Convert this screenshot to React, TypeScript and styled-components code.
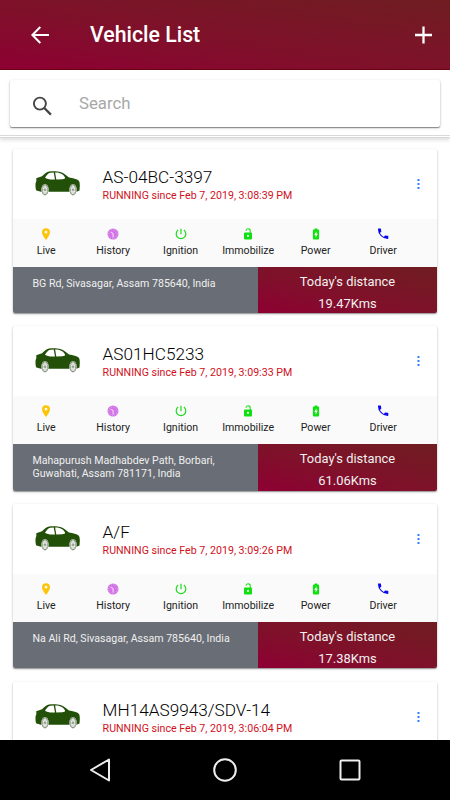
import React from "react";
import styled, { createGlobalStyle } from "styled-components";

const Global = createGlobalStyle`
  * { box-sizing: border-box; }
  body { margin: 0; background: #fff; font-family: Roboto, "Liberation Sans", sans-serif; }
`;

const Screen = styled.div`
  width: 450px;
  height: 800px;
  display: flex;
  flex-direction: column;
  overflow: hidden;
  background: #fff;
`;

const AppBar = styled.header`
  flex: none;
  height: 70px;
  display: flex;
  align-items: center;
  padding: 0 17px 0 30px;
  color: #fff;
  background: linear-gradient(to top right, #8e0033 0%, #7f112a 45%, #6f1d21 100%);
  border-bottom: 1px solid #6c0714;
`;

const BarIcon = styled.svg`
  flex: none;
  width: 20px;
  height: 20px;
  display: block;
`;

const Title = styled.h1`
  flex: 1;
  margin: 0 0 0 40px;
  font-size: 21.3px;
  line-height: 28px;
  font-weight: 500;
`;

const SearchSection = styled.div`
  flex: none;
  height: 68px;
  padding: 10px 10px 0;
  border-bottom: 3px double #d9d9d9;
  box-shadow: 0 2px 4px rgba(0, 0, 0, 0.14);
`;

const SearchBox = styled.div`
  height: 46.5px;
  display: flex;
  align-items: center;
  padding-left: 22px;
  border-radius: 2px;
  background: #fff;
  box-shadow: 0 1px 1px rgba(0, 0, 0, 0.38), 0 1px 3px rgba(0, 0, 0, 0.22);
`;

const SearchGlyph = styled.svg`
  width: 20px;
  height: 20px;
  margin-top: 6px;
`;

const Placeholder = styled.span`
  margin-left: 27px;
  color: #a8a8a8;
  font-size: 16.8px;
  line-height: 20px;
`;

const List = styled.main`
  flex: 1;
  min-height: 0;
  overflow: hidden;
  padding: 10.8px 13px 0;
`;

const Card = styled.article`
  margin-bottom: 13.2px;
  border-radius: 2px;
  overflow: hidden;
  background: #fff;
  box-shadow: 0 1px 1px rgba(0, 0, 0, 0.3), 0 1px 3px rgba(0, 0, 0, 0.2);
`;

const Head = styled.div`
  height: 70px;
  display: flex;
  align-items: flex-start;
  padding: 0 14px 0 22px;
`;

const Car = styled.svg`
  flex: none;
  width: 46px;
  height: 27px;
  margin-top: 22px;
`;

const HeadText = styled.div`
  flex: 1;
  margin: 17px 0 0 21.6px;
  white-space: nowrap;
`;

const Plate = styled.div`
  font-size: 17.2px;
  line-height: 22px;
  font-weight: 300;
  color: #000;
`;

const Status = styled.div`
  font-size: 10.64px;
  line-height: 15px;
  color: #d0101c;
`;

const More = styled.svg`
  flex: none;
  width: 10px;
  height: 12px;
  margin-top: 29px;
`;

const Actions = styled.div`
  height: 48px;
  display: grid;
  grid-template-columns: 66.4px repeat(5, 67.5px);
  background: #fafafa;
`;

const Action = styled.div`
  display: flex;
  flex-direction: column;
  align-items: center;
  padding-top: 9px;
  font-size: 10.6px;
  line-height: 14px;
  color: #222;
`;

const ActionIcon = styled.svg`
  width: 12px;
  height: 12px;
  margin-bottom: 4px;
`;

const Footer = styled.div`
  height: 46.4px;
  display: flex;
  color: #f0f0f0;
`;

const Address = styled.div`
  width: 245px;
  padding: 10px 20px 0 19.5px;
  background: #696d75;
  font-size: 10.6px;
  line-height: 13px;
`;

const Distance = styled.div`
  flex: 1;
  padding: 4px 0 0;
  text-align: center;
  font-size: 12.9px;
  line-height: 22px;
  background: linear-gradient(to top right, #8e0033 0%, #7f112a 45%, #6f1d21 100%);
`;

const NavBar = styled.nav`
  flex: none;
  height: 60px;
  display: flex;
  align-items: center;
  justify-content: space-between;
  padding: 0 88px;
  background: #000;
`;

const NavIcon = styled.svg`
  width: 24px;
  height: 24px;
`;

const actions: { label: string; icon: React.ReactNode }[] = [
  {
    label: "Live",
    icon: (
      <path
        fill="#fdc409"
        fillRule="evenodd"
        d="M6 .2A4 4 0 0 0 2 4.2C2 7.2 6 12 6 12s4-4.8 4-7.8A4 4 0 0 0 6 .2zm0 2.6a1.4 1.4 0 1 1 0 2.8 1.4 1.4 0 0 1 0-2.8z"
      />
    ),
  },
  {
    label: "History",
    icon: (
      <>
        <circle cx="6" cy="6" r="5.5" fill="#d273e6" />
        <circle cx="6" cy="6" r="4.2" fill="none" stroke="#f0cef7" strokeWidth=".8" strokeDasharray=".7 1.5" />
        <path d="M3.6 4.3 6.1 5.4V9.4" fill="none" stroke="#faf0fc" strokeWidth=".9" />
      </>
    ),
  },
  {
    label: "Ignition",
    icon: (
      <path d="M6 .7v5.6M3.1 2.1a4.8 4.8 0 1 0 5.8 0" fill="none" stroke="#1bdc1b" strokeWidth="1.2" />
    ),
  },
  {
    label: "Immobilize",
    icon: (
      <>
        <path d="M4 2.7A2.1 2.1 0 0 1 8.2 2.9V5" fill="none" stroke="#0fe00f" strokeWidth="1.1" />
        <rect x="2" y="4.4" width="8" height="7" rx="1" fill="#0fe00f" />
        <circle cx="6" cy="7.9" r="1.05" fill="#fafafa" />
      </>
    ),
  },
  {
    label: "Power",
    icon: (
      <>
        <path d="M4.7.6h2.6v1h1q.8 0 .8.8v8.2q0 .8-.8.8H3.7q-.8 0-.8-.8V2.4q0-.8.8-.8h1z" fill="#0fe00f" />
        <path d="M6.5 3.3 4.2 7.1h1.4v2.6l2.2-3.9H6.5z" fill="#fafafa" />
      </>
    ),
  },
  {
    label: "Driver",
    icon: (
      <path
        fill="#0808f0"
        d="M2.9 5A8.6 8.6 0 0 0 6.8 8.9l1.3-1.3c.2-.2.4-.2.6-.1.7.2 1.4.3 2.1.3.3 0 .5.2.5.5v2.2c0 .3-.2.5-.5.5A9.9 9.9 0 0 1 .9 1.1C.9.8 1.1.6 1.4.6h2.1c.3 0 .5.2.5.5 0 .7.1 1.4.3 2.1.1.2 0 .4-.1.6z"
      />
    ),
  },
];

interface Vehicle {
  plate: string;
  time: string;
  details?: { address: string; km: string };
}

const vehicles: Vehicle[] = [
  {
    plate: "AS-04BC-3397",
    time: "3:08:39 PM",
    details: { address: "BG Rd, Sivasagar, Assam 785640, India", km: "19.47Kms" },
  },
  {
    plate: "AS01HC5233",
    time: "3:09:33 PM",
    details: { address: "Mahapurush Madhabdev Path, Borbari, Guwahati, Assam 781171, India", km: "61.06Kms" },
  },
  {
    plate: "A/F",
    time: "3:09:26 PM",
    details: { address: "Na Ali Rd, Sivasagar, Assam 785640, India", km: "17.38Kms" },
  },
  { plate: "MH14AS9943/SDV-14", time: "3:06:04 PM" },
];

function CarDrawing() {
  return (
    <Car viewBox="0 0 46 27">
      <path
        fill="#235008"
        d="M1.2 7.2 7 5.2C9.5 2.5 12 1 14 .5c4-.5 8.500-.4 11.400.5C29 2.300 31.500 4.500 34 6.400c4 .7 8 1.500 9.800 3.300.9 1.300 1 3 1 5.300l-.3 4.600-3 1.200H6l-4.600-1.200C.7 18.500.4 16 .5 13c.2-1.500.6-2.400.9-3.300z"
      />
      <path
        fill="#fff"
        d="M10 6.800c1.400-2.700 3.300-4.500 5.300-5l3.400-.2 1.300 6.800c-3.500.3-7.900.2-10-1.600zM20.100 1.600c3.400 0 5.300.5 7 1.600 1.600 1.100 2.600 2.500 3.100 3.800-.6.8-1.500 1.200-2.700 1.200l-6.200.3z"
      />
      {[10, 38].map((x) => (
        <g key={x}>
          <ellipse cx={x} cy="18.8" rx="3.8" ry="5.900" fill="#f8faf7" />
          <ellipse cx={x} cy="18.8" rx="3.1" ry="5.100" fill="#c8cec4" stroke="#526449" strokeWidth=".7" />
          <path d={`M${x} 14.5v8.6M${x - 2.5} 16.800l5 4.200M${x + 2.5} 16.800l-5 4.200`} stroke="#fff" strokeWidth=".8" />
          <ellipse cx={x} cy="18.8" rx=".8" ry="1.200" fill="#718069" />
        </g>
      ))}
    </Car>
  );
}

export default function App() {
  return (
    <>
      <Global />
      <Screen>
        <AppBar>
          <BarIcon viewBox="0 0 20 20">
            <path d="M19 10H3M10.3 2 2.400 10l7.900 8" fill="none" stroke="#fff" strokeWidth="2" />
          </BarIcon>
          <Title>Vehicle List</Title>
          <BarIcon viewBox="0 0 20 20">
            <path d="M2 10h17M10.5 1.500v17" fill="none" stroke="#fff" strokeWidth="2.3" />
          </BarIcon>
        </AppBar>
        <SearchSection>
          <SearchBox>
            <SearchGlyph viewBox="0 0 20 20">
              <circle cx="7.9" cy="7.6" r="6" fill="none" stroke="#444" strokeWidth="1.9" />
              <path d="m12.300 12 6.600 6.600" stroke="#444" strokeWidth="2.3" />
            </SearchGlyph>
            <Placeholder>Search</Placeholder>
          </SearchBox>
        </SearchSection>
        <List>
          {vehicles.map((v) => (
            <Card key={v.plate}>
              <Head>
                <CarDrawing />
                <HeadText>
                  <Plate>{v.plate}</Plate>
                  <Status>RUNNING since Feb 7, 2019, {v.time}</Status>
                </HeadText>
                <More viewBox="0 0 10 12">
                  <path d="M4.500 1h2v2h-2zM4.500 5h2v2h-2zM4.500 9h2v2h-2z" fill="#2c80ff" />
                </More>
              </Head>
              {v.details && (
                <>
                  <Actions>
                    {actions.map((a) => (
                      <Action key={a.label}>
                        <ActionIcon viewBox="0 0 12 12">{a.icon}</ActionIcon>
                        {a.label}
                      </Action>
                    ))}
                  </Actions>
                  <Footer>
                    <Address>{v.details.address}</Address>
                    <Distance>
                      <div>Today's distance</div>
                      <div>{v.details.km}</div>
                    </Distance>
                  </Footer>
                </>
              )}
            </Card>
          ))}
        </List>
        <NavBar>
          <NavIcon viewBox="0 0 24 24">
            <path d="M3 12 21 1.500v21z" fill="none" stroke="#eee" strokeWidth="2" strokeLinejoin="round" />
          </NavIcon>
          <NavIcon viewBox="0 0 24 24">
            <circle cx="12" cy="12" r="10.8" fill="none" stroke="#eee" strokeWidth="2" />
          </NavIcon>
          <NavIcon viewBox="0 0 24 24">
            <rect x="2.5" y="2.5" width="19" height="19" rx="1" fill="none" stroke="#eee" strokeWidth="2" />
          </NavIcon>
        </NavBar>
      </Screen>
    </>
  );
}
